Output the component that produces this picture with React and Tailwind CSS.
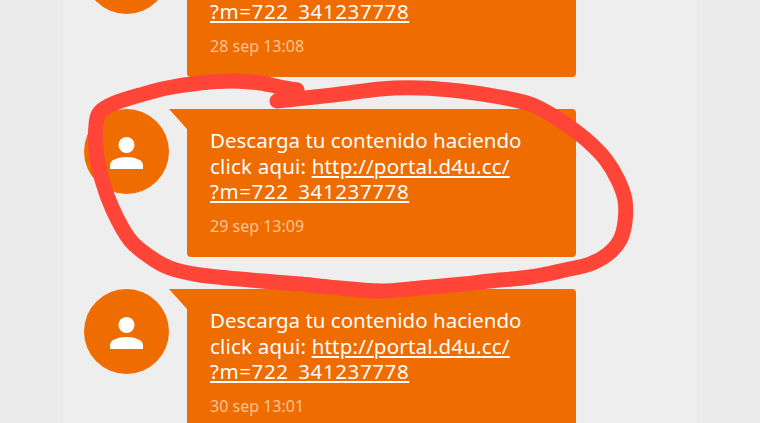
const messages = [
  { id: 1, time: "28 sep 13:08" },
  { id: 2, time: "29 sep 13:09" },
  { id: 3, time: "30 sep 13:01" },
];

// pen stroke traced from the picture, smoothed with catmull-rom
const strokePoints = [
  [277, 101], [333, 95], [380, 89], [420, 88], [460, 91], [500, 97], [530, 104], [550, 114],
  [570, 127], [590, 143], [606, 160], [618, 180], [625, 200], [625, 222], [620, 240], [608, 254],
  [590, 264], [565, 270], [530, 277], [490, 281], [463, 284], [420, 288], [380, 291], [340, 288],
  [300, 284], [250, 280], [200, 275], [170, 268], [150, 257], [130, 240], [113, 210], [102, 180],
  [96, 150], [96, 125], [100, 112], [115, 103], [140, 95], [167, 88], [200, 83], [233, 81],
  [260, 83], [280, 87], [297, 90],
];

const smoothPath = (pts) => {
  let d = `M${pts[0][0]} ${pts[0][1]}`;
  for (let i = 0; i < pts.length - 1; i++) {
    const p0 = pts[i - 1] || pts[i];
    const p1 = pts[i];
    const p2 = pts[i + 1];
    const p3 = pts[i + 2] || p2;
    const c1x = p1[0] + (p2[0] - p0[0]) / 6;
    const c1y = p1[1] + (p2[1] - p0[1]) / 6;
    const c2x = p2[0] - (p3[0] - p1[0]) / 6;
    const c2y = p2[1] - (p3[1] - p1[1]) / 6;
    d += ` C${c1x} ${c1y} ${c2x} ${c2y} ${p2[0]} ${p2[1]}`;
  }
  return d;
};

const Avatar = () => (
  <div className="flex h-[85px] w-[85px] shrink-0 items-center justify-center rounded-full bg-[#ef6c00]">
    <svg className="mt-[2px]" width="33" height="32" viewBox="0 0 33 32" fill="#fff">
      <circle cx="16.5" cy="8" r="8" />
      <path d="M0 32 V28 C0 23 8 20 16.5 20 C25 20 33 23 33 28 V32 Z" />
    </svg>
  </div>
);

const Message = ({ time }) => (
  <div className="flex h-[148px] shrink-0 items-start">
    <Avatar />
    <div
      className="h-5 w-[18px] shrink-0 bg-[#ef6c00]"
      style={{ clipPath: "polygon(0 0, 100% 0, 100% 100%)" }}
    />
    <div className="h-full w-[389px] rounded-[4px] rounded-tl-none bg-[#ef6c00] pl-[23px] pt-[19px] text-white">
      <p className="text-[20.5px] leading-[25.5px]">
        Descarga tu contenido haciendo
        <br />
        <span className="tracking-[0.2px]">click aqui:</span>{" "}
        <a className="underline" href="#">
          <span className="tracking-[0.2px]">http://portal.d4u.cc/</span>
          <br />
          <span className="tracking-[0.6px]">?m=722_341237778</span>
        </a>
      </p>
      <p className="mt-[11px] text-[16px] leading-[20px] text-[#fbc493]">{time}</p>
    </div>
  </div>
);

const Scribble = () => (
  <svg className="pointer-events-none absolute left-0 top-0" width="760" height="423" viewBox="0 0 760 423" fill="none">
    <path
      d={smoothPath(strokePoints)}
      stroke="#ff4438"
      strokeWidth="15"
      strokeLinecap="round"
      strokeLinejoin="round"
    />
  </svg>
);

const App = () => {
  return (
    <div className="relative flex h-[423px] w-[760px] overflow-hidden bg-[#ebebeb] px-[63px] [font-family:'Noto_Sans',sans-serif]">
      <div className="flex h-full w-full flex-col bg-[#eeeeee] pl-[21px]">
        <div className="-mt-[71px] flex shrink-0 flex-col gap-8">
          {messages.map((m) => (
            <Message key={m.id} time={m.time} />
          ))}
        </div>
      </div>
      <Scribble />
    </div>
  );
};

export default App;
